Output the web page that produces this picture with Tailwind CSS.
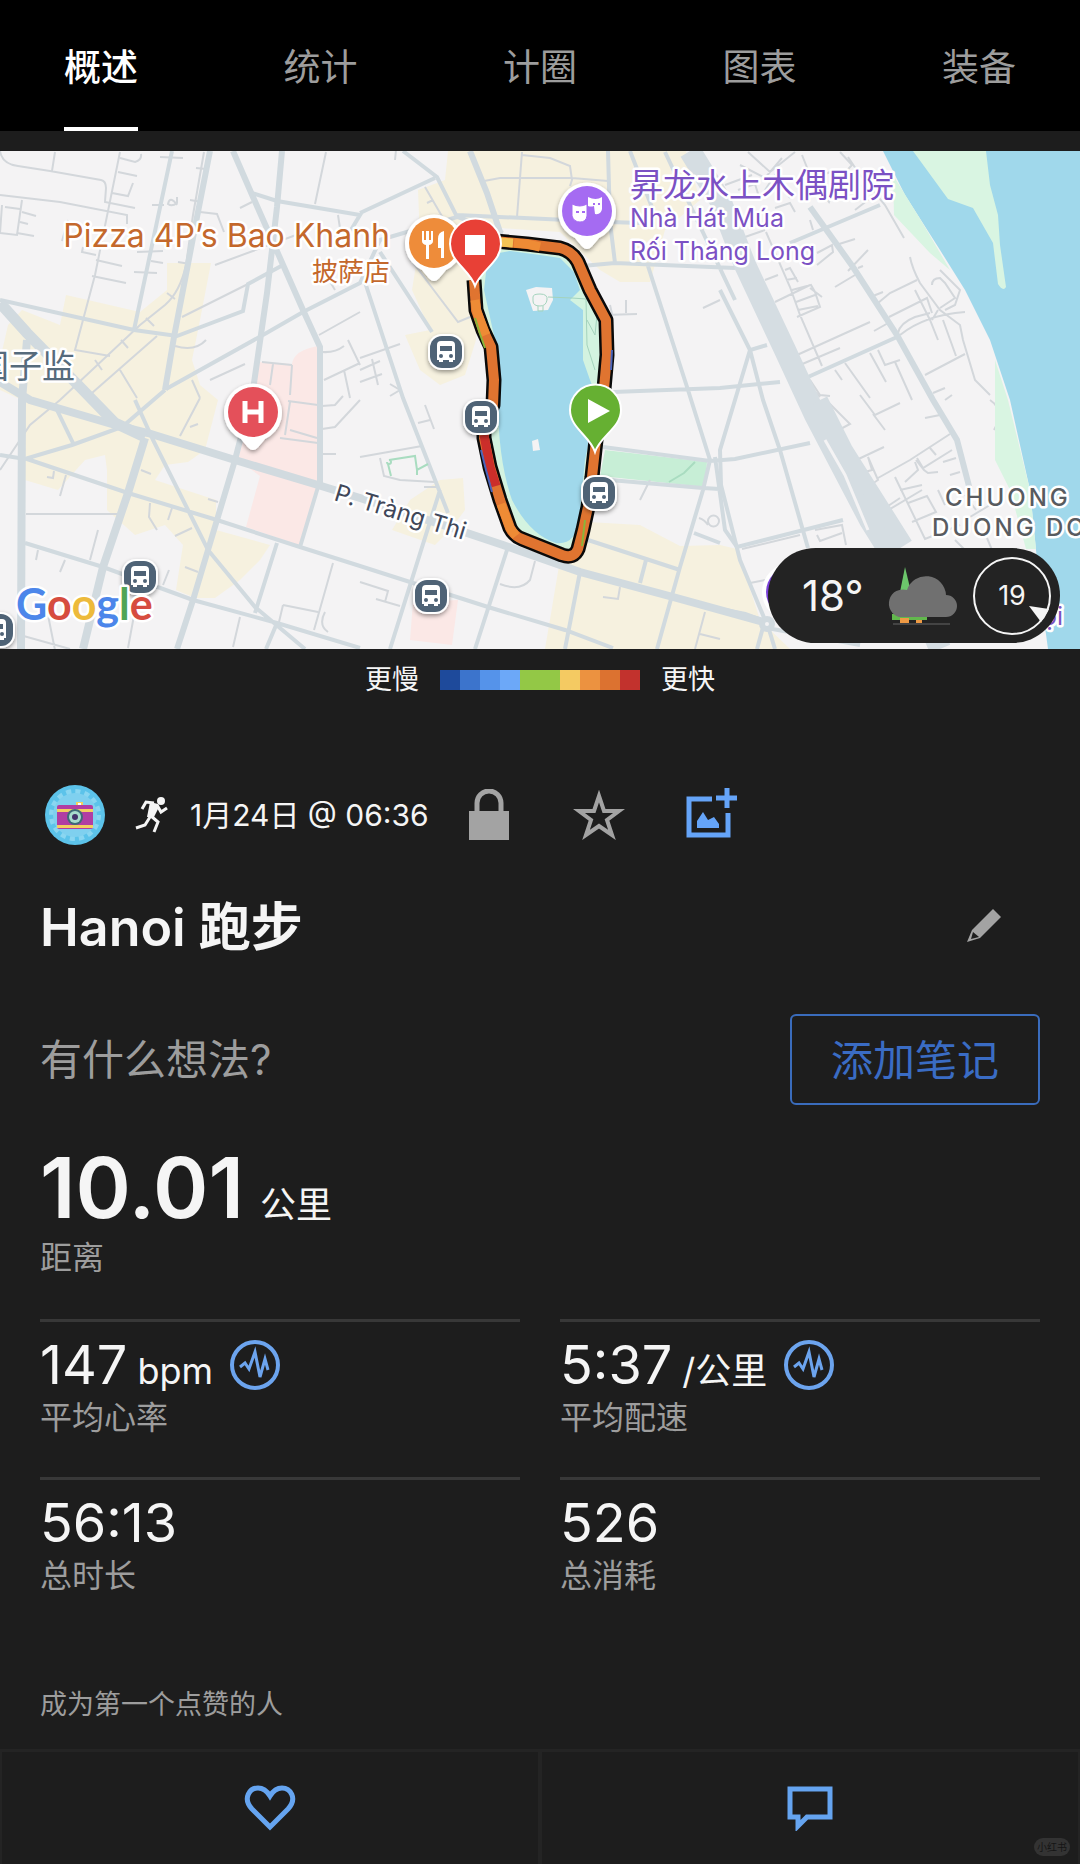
<!DOCTYPE html>
<html lang="zh-CN">
<head>
    <meta charset="UTF-8">
    <meta name="viewport" content="width=device-width, initial-scale=1.0">
    <title>Hanoi 跑步</title>
    <script src="https://cdn.jsdelivr.net/npm/@tailwindcss/browser@4"></script>
</head>
<body class="min-h-screen flex flex-col bg-[#1d1d1d] text-[#f5f5f5] font-['Inter','Noto_Sans_CJK_SC',sans-serif]">

    <!-- Tabs -->
    <nav class="flex justify-between bg-black px-16 text-[37px] leading-[56px] text-[#9d9d9d]">
        <button class="pt-10 pb-[31px] border-b-4 border-white text-white font-medium">概述</button>
        <button class="pt-10 pb-[31px] border-b-4 border-black">统计</button>
        <button class="pt-10 pb-[31px] border-b-4 border-black">计圈</button>
        <button class="pt-10 pb-[31px] border-b-4 border-black">图表</button>
        <button class="pt-10 pb-[31px] border-b-4 border-black">装备</button>
    </nav>

    <!-- Map -->
    <section class="relative mt-5 overflow-hidden">
        <svg class="block w-full h-[498px]" viewBox="0 151 1080 498" preserveAspectRatio="xMidYMid slice">
            <defs>
                <filter id="shadow" x="-30%" y="-30%" width="160%" height="170%">
                    <feDropShadow dx="0" dy="2" stdDeviation="2" flood-color="#000" flood-opacity=".4"/>
                </filter>
                <g id="bus">
                    <rect x="-18" y="-18" width="36" height="36" rx="14" fill="#fff" filter="url(#shadow)"/>
                    <rect x="-16" y="-16" width="32" height="32" rx="12" fill="#4f6376"/>
                    <path d="M-9 -7q0 -4 4 -4h10q4 0 4 4v15h-2v2h-4v-2h-6v2h-4v-2h-2z" fill="#fff"/>
                    <path d="M-6 -6h12v5h-12z" fill="#4f6376"/>
                    <circle cx="-5" cy="4" r="2" fill="#4f6376"/>
                    <circle cx="5" cy="4" r="2" fill="#4f6376"/>
                </g>
                <path id="poi" d="M0 38c-4 0 -7 -5 -12 -11a29 29 0 1 1 24 0c-5 6 -8 11 -12 11z" fill="#fff" filter="url(#shadow)"/>
            </defs>

            <rect x="0" y="151" width="1080" height="498" fill="#f4f3f4"/>

            <!-- land use -->
            <g fill="#f6f1df">
                <path d="M66 295L140 312L167 290V263H211L200 320L192 360L200 385L218 400L205 450L188 462L165 465L155 480L216 500V530L270 545L260 560L240 580L215 598L195 598L176 590L183 545L165 525L135 535L107 510V470L105 455L85 460L58 490L25 480L22 400L0 390V360L8 325L22 310L60 325Z"/>
                <path d="M448 151H686L700 200L665 230L650 282H620L600 270L560 232L500 228L478 260L476 340L465 375L440 385L420 370L405 335L430 330L412 290L420 240L418 190L445 180Z"/>
                <path d="M392 530L410 500L440 480L463 478L465 510L450 530L435 545Z"/>
                <path d="M545 649L560 560L588 522L640 525L680 546L720 545L737 549L760 620L790 649Z"/>
            </g>
            <g fill="#fbe8e6">
                <path d="M258 362L292 364Q294 350 318 346L320 485L301 546L246 527L260 476L238 460L253 400Z"/>
                <path d="M413 602L458 600L452 645L410 640Z"/>
            </g>
            <path d="M605 450L707 462L705 487L600 476Z" fill="#c7eed6"/>

            <!-- rail and side streets -->
            <g fill="none" stroke="#d3d7db" stroke-width="2">
                <path d="M0 151Q2 164 18 166L50 171L101 180Q106 181 106 188L105 202L135 208M52 171L55 152M0 195L60 202L127 215V224M2 205L0 233L17 235L22 200M22 212L36 216M20 222L28 224M17 233L34 236M5 207L20 209M68 220L62 241M120 152L95 275L75 350L110 356M118 172L137 176M120 158L135 162Q142 160 141 154M112 193L128 196L133 183M83 247L82 252L96 255M96 260L122 266M92 276L126 283M160 157L183 158M196 168L206 169M190 200L202 202M137 252L163 251M134 272L157 273M151 261L163 263M178 262L190 264M215 265L296 235M182 317L248 284"/>
                <path d="M204 152L193 215L186 265Q180 292 165 305L140 325L60 400L30 425L0 470M167 293L175 299M146 318L154 326M121 340L128 348M95 360L102 370M152 205H164M177 205Q170 195 168 204Q172 207 177 203V197M200 212L217 214L224 232M240 208L252 202M326 152L315 204M338 215L341 235M157 336L92 393M120 370L137 398M175 346Q195 352 206 340M192 380L200 398M210 380L245 364M262 362L292 365M273 364L270 385M292 365L290 395M319 335L360 312M322 352Q335 353 344 346M324 380L360 363M348 340L360 365M344 370L350 398M335 290L318 262M26 514H118M47 477L53 478L54 471M66 475L60 496M38 550L36 560M65 560L60 572M98 530L90 560M150 503L149 517L157 530M172 508L168 520M192 528L175 536M208 499L218 502M185 567L198 572M169 570L163 585M141 470L151 474M280 151M333 563L314 630M283 605L318 612M283 605L279 622M325 612Q318 625 328 632M240 617L233 647M135 610L128 648M48 615L55 650M20 635L70 649M290 402L285 435M288 401L318 405M280 438L318 443M290 430L317 438M200 398L180 436M190 427L198 424M322 406L335 405L343 396M322 429L335 427L360 400M322 454H336"/>
                <path d="M522 152L517 217M522 155L550 158L570 166L572 180L570 186M484 181L500 178L572 178L608 181M425 187L447 225L450 235M427 203L433 200M411 260L458 322L470 317M360 358L400 344M360 370L380 361M372 359L378 385M360 382L382 374M390 384L400 390L390 396M396 150L395 160M610 305L612 314M605 315L637 314M626 300V313M703 308L720 300M425 405L434 429M418 423L430 420M360 457L422 446M380 458L384 476L400 480L435 482M424 487L436 487M535 561L530 580Q520 592 500 584M360 582L388 591L385 602M376 599L400 606M603 597L618 599L620 587M699 518Q705 520 708 525M708 521A5 5 0 1 0 719 521A5 5 0 1 0 708 521M705 612L695 649M700 634L720 639M650 480L640 500"/>
                <path d="M748 152L770 172L795 152M740 165L765 178L782 158M725 185L752 175M738 190L755 184L760 200M765 190L775 175L790 198M775 208L790 203L795 212M802 155L812 180L830 172M820 190L829 202L832 195M840 152L852 165L840 178M862 185L868 200L855 210M848 157L860 175L885 205L904 238M745 237L765 230M766 232L790 287L800 315L822 366M810 220L813 230M817 253L832 245L833 252L817 265M836 245L855 239M848 271L868 250M858 268L863 266M835 287L855 275M785 270L790 268L798 282M786 280L797 278M765 280L778 275M775 302L810 285M792 290L811 285L815 292L820 307L797 317M810 288L822 297M796 302L815 295M798 310L818 306M873 296L883 292M878 303L890 293L917 280M889 317L927 298L932 313M874 331L890 322M797 355L870 322M800 365L840 348M910 257Q912 268 920 283L940 310L960 325L963 340L975 380L990 395M932 285Q932 278 940 278L945 283L955 298L940 308M940 270L960 290L955 305L945 310M915 290L930 320L938 340M900 335Q925 315 965 312M898 333Q900 323 915 317L930 313M932 320L938 310M943 320L956 356M925 375L965 354M835 370L842 380M845 363L870 398M878 350L885 365L900 360M870 353L886 382M895 362L912 400M810 380L820 395L830 396M933 393L945 388"/>
                <path d="M826 400L850 424L835 432M860 395L875 415L900 403M873 414L885 430M925 418L940 415M850 463L884 447M854 475L872 470L868 457L878 480L866 488M878 478L910 460L950 434M917 458L923 468L952 450M930 448L936 455M916 460L924 470L928 473L938 472M915 462L918 470L905 482M895 477L925 539L960 525M900 490L922 485M880 515L922 490M882 510L900 498M908 503L927 496L936 512L912 522M943 462L956 458M950 475L960 472M938 490L945 505M965 520L990 505M976 510L965 495M815 530L842 525L846 545M817 535L820 541L842 533M742 549L800 535M750 583L765 580M990 400Q1005 410 994 430M987 538L992 550M955 540L965 550M805 382L820 397M945 400L952 395"/>
            </g>

            <!-- main streets -->
            <g fill="none" stroke="#d1dadf" stroke-width="4">
                <path d="M172 151L134 330M252 193L277 201L360 215L345 240M283 265L248 284L243 311L177 336L134 330L0 300M166 389L263 335L303 312L360 283L380 240L457 217M57 410L73 443M135 400L153 440L188 510L208 550L255 607L305 649M25 543L103 567L193 600L277 623L360 648M277 543L255 613M277 623L266 649M318 487L300 547M27 459L128 493L217 520L300 547L360 566L410 582L488 607L565 630L613 648M0 455L25 459L72 445L122 427L165 390"/>
                <path d="M360 213L435 178M403 151L437 177L457 217L503 233M457 215L610 222L640 223M608 151L610 222L615 263M630 151L655 215M582 266L615 263L735 268M360 267L403 398L448 513M380 252L432 332M647 263L688 390L710 460L703 490L680 567L657 649M613 392L720 388L780 382M665 152L690 205L735 300M603 447L710 461L735 459L810 443M610 480L703 488L720 489M588 540L680 570M694 533L720 543M646 560L640 583M440 490L390 649M507 550L475 649M580 572L565 649M715 457L725 530L737 547L843 520M360 457"/>
                <path d="M720 290L750 350L763 400L780 450L808 548M767 345L750 350L735 400L720 450L721 485L740 560L765 620L757 649M767 623L775 649M808 377L897 337M790 243L880 205M767 628L860 645"/>
            </g>
            <g fill="none" stroke="#d1dadf" stroke-width="6">
                <path d="M210 151L197 217L174 337L165 390M233 151L253 197L303 310L320 347V487M282 151L277 207L267 293L253 390L235 460L208 550L193 600L177 649M470 151L487 193L500 232M810 207L853 267L897 335L933 400L957 440L970 490M767 623L745 615L720 610"/>
            </g>
            <g fill="none" stroke="#d1dadf" stroke-width="8">
                <path d="M27 340L22 400L21 649M0 382L30 400L115 425L148 433L235 460L318 485L360 498L467 533L503 545L580 572L673 597L767 623M145 438L128 493L103 567L83 649"/>
                <path d="M0 303L27 333L80 387L115 423L145 437" stroke-width="11"/>
                <path d="M690 151L720 200L745 265L785 350L815 415L870 520L920 600L940 649" stroke-width="22" stroke="#d5dde2"/>
                <path d="M820 400L845 450L905 545" stroke-width="16" stroke="#d5dde2"/>
                <path d="M825 440L845 475L868 530" stroke="#f4f3f4" stroke-width="3"/>
            </g>
            <circle cx="767" cy="624" r="5" fill="#f4f3f4" stroke="#d1dadf" stroke-width="6"/>
            <path d="M387 462A2 2 0 1 0 389 460L415 456L417 470L428 464M417 468V475M388 464L391 476M695 462L684 473L669 482" fill="none" stroke="#a9dcc0" stroke-width="2"/>

            <!-- Red River -->
            <path d="M883 151L905 195L940 250L965 290L990 340L1010 400L1030 490L1040 590L1048 649H1080V151Z" fill="#a0d8eb"/>
            <g fill="#d9f5e2">
                <path d="M913 151L948 199L973 208L993 243L998 284Q1003 292 1006 287L1000 245L998 215L990 185L986 151Z"/>
                <path d="M893 175L922 222L950 270L930 253L894 215Z"/>
                <path d="M995 360L1008 400L1030 490L1036 549H1026L1010 490L995 460Z"/>
            </g>

            <!-- Hoan Kiem lake -->
            <path d="M474 284L482 327L493 380L484 437L500 500L510 530L570 555L582 533L595 450L607 350L606 320L570 252L527 244L478 245Z" fill="#d3f3e0"/>
            <path d="M488 255L510 251L540 255L560 258L574 272L580 290L570 300L583 310L583 360L590 380L598 400L585 460L579 520Q576 545 556 543Q530 535 512 500Q498 460 498 400L495 340L484 290Z" fill="#a0d8eb"/>
            <path d="M526 290L536 287L552 288L553 300L548 310L533 311Z" fill="#f4f3f4"/>
            <path d="M533 297Q533 294 540 294Q548 294 547 300Q546 306 540 306Q533 306 533 301ZM538 306V311H543V306M548 297L572 298L586 299L587 345L595 370M587 320L595 335L597 315" fill="none" stroke="#a4d3bd" stroke-width="1"/>
            <path d="M532 441L538 439L540 450L533 451Z" fill="#f4f3f4"/>

            <!-- route -->
            <g fill="none" stroke-linejoin="round">
                <path d="M474 280L476 310L483 330L491 347L494 380L493 405L484 425V438L490 467L500 500L510 528Q514 536 522 539L562 555Q574 559 578 549L583 530L588 507L592 477L596 440L603 400L607 355L606 320L590 290L578 262Q572 251 560 248L527 244L495 241" stroke="#0a0a0a" stroke-width="15"/>
                <path d="M474 280L476 310L483 330L491 347L494 380L493 405L484 425V438L490 467L500 500L510 528Q514 536 522 539L562 555Q574 559 578 549L583 530L588 507L592 477L596 440L603 400L607 355L606 320L590 290L578 262Q572 251 560 248L527 244L495 241" stroke="#e07430" stroke-width="10"/>
                <path d="M475 300L477 312L486 335M540 247L527 244L514 243M501 504L510 528L516 536" stroke="#ee8b35" stroke-width="9"/>
                <path d="M513 243L500 242" stroke="#f3c355" stroke-width="9"/>
                <path d="M484 435L490 467L496 486" stroke="#cb2e2a" stroke-width="9"/>
                <path d="M475 318L480 334L485 348M585 520L582 546" stroke="#8ab53a" stroke-width="2"/>
                <path d="M481 450L486 470L492 492M612 350L611 370" stroke="#4a64ba" stroke-width="2"/>
            </g>

            <!-- place pins -->
            <g transform="translate(434 243)">
                <use href="#poi"/>
                <circle r="25" fill="#ee8c3a"/>
                <path d="M-12 -12h2v9h2v-9h3v9h2v-9h2v10q0 3 -4 4v14h-3v-14q-4 -1 -4 -4zM10 -12q-6 1 -6 8v9h3v10h3z" fill="#fff"/>
            </g>
            <g transform="translate(587 211)">
                <use href="#poi"/>
                <circle r="25" fill="#a56bf2"/>
                <path d="M1 -14q8 4 14 0v12q-1 6 -7 5l-1 -8q-3 1 -6 0z" fill="#fff"/>
                <path d="M-15 -7q8 4 15 0v12q-1 6 -7 6t-8 -6z" fill="#fff" stroke="#a56bf2"/>
                <path d="M-11 1h3M-5 1h3M6 -7h2M11 -7h2" stroke="#a56bf2" stroke-width="2"/>
            </g>
            <g transform="translate(253 412)">
                <use href="#poi"/>
                <circle r="25" fill="#e4505a"/>
                <path d="M-8 -11V11M8 -11V11M-8 0H8" stroke="#fff" stroke-width="5"/>
            </g>
            <use href="#bus" x="446" y="352"/>
            <use href="#bus" x="481" y="417"/>
            <use href="#bus" x="599" y="493"/>
            <use href="#bus" x="431" y="596"/>
            <use href="#bus" x="140" y="577"/>
            <use href="#bus" x="-3" y="630"/>
            <circle cx="791" cy="592" r="29" fill="#fff"/>
            <circle cx="791" cy="592" r="25" fill="#7b41d8"/>

            <!-- start / stop markers -->
            <path d="M475 286C470 270 450 262 450 244a25 25 0 1 1 51 0C501 262 481 270 475 286Z" fill="#e84036" stroke="#fff" stroke-width="2"/>
            <path d="M465 235h20v20h-20z" fill="#fff"/>
            <path d="M595 452C590 436 570 428 570 410a25 25 0 1 1 51 0C621 428 600 436 595 452Z" fill="#66b032" stroke="#fff" stroke-width="2"/>
            <path d="M588 399L610 411L588 423Z" fill="#fff"/>

            <!-- labels -->
            <g stroke="#fff" stroke-width="5" stroke-linejoin="round" paint-order="stroke">
                <g fill="#c4682c" text-anchor="end">
                    <text x="390" y="247" font-size="32">Pizza 4P’s Bao Khanh</text>
                    <text x="390" y="281" font-size="26">披萨店</text>
                </g>
                <g fill="#7b51c4">
                    <text x="630" y="197" font-size="33">昇龙水上木偶剧院</text>
                    <text x="630" y="227" font-size="25">Nhà Hát Múa</text>
                    <text x="630" y="260" font-size="25">Rối Thăng Long</text>
                    <text x="1042" y="625" font-size="25">ọi</text>
                </g>
                <text x="75" y="378" font-size="33" fill="#566b7c" text-anchor="end">国子监</text>
                <text transform="translate(333 500) rotate(17)" font-size="24" fill="#3f4759">P. Tràng Thi</text>
                <g fill="#585b60" font-size="24" font-weight="500" letter-spacing="3">
                    <text x="945" y="506">CHUONG</text>
                    <text x="932" y="536">DUONG DO</text>
                </g>
                <text x="16" y="620" font-size="43" font-weight="700" font-family="Lato, sans-serif"><tspan fill="#4c86ea">G</tspan><tspan fill="#d64c3f">o</tspan><tspan fill="#edba3b">o</tspan><tspan fill="#4c86ea">g</tspan><tspan fill="#4fa556">l</tspan><tspan fill="#d64c3f">e</tspan></text>
            </g>
        </svg>

        <!-- Weather -->
        <div class="absolute right-5 bottom-[6px] w-[292px] h-[95px] rounded-full bg-[#232323] flex items-center justify-between pl-[34px] pr-2">
            <span class="text-[42px] leading-none">18°</span>
            <svg class="w-20 h-[60px]" viewBox="0 0 80 60">
                <path d="M22 26L27 1L33 26Z" fill="#6cc66b"/>
                <path d="M14 48h35v6H14z" fill="#62b84d"/>
                <path d="M22 52h9v5h-9zM38 54h6v3h-6z" fill="#ee9a44"/>
                <path d="M21 51a14 14 0 1 1 8 -27a20 20 0 0 1 39 5a11 11 0 0 1 0 22z" fill="#707070"/>
                <path d="M15 58h57" stroke="#444" stroke-width="2"/>
            </svg>
            <div class="relative size-20 flex items-center justify-center">
                <svg class="absolute inset-0" viewBox="0 0 80 80">
                    <circle cx="40" cy="40" r="38" fill="none" stroke="#f5f5f5" stroke-width="2"/>
                    <path d="M57 50L77 53L69 66Z" fill="#f5f5f5"/>
                </svg>
                <span class="text-[27px] leading-none">19</span>
            </div>
        </div>
    </section>

    <!-- Pace legend -->
    <div class="h-[60px] pt-[2px] flex items-center justify-center gap-[21px] text-[27px] leading-10">
        <span>更慢</span>
        <div class="w-[200px] h-5 grid grid-cols-10">
            <i class="bg-[#1e4a9b]"></i>
            <i class="bg-[#3c74cc]"></i>
            <i class="bg-[#5593ea]"></i>
            <i class="bg-[#6ca8f8]"></i>
            <i class="bg-[#93c846]"></i>
            <i class="bg-[#93c846]"></i>
            <i class="bg-[#f4ca62]"></i>
            <i class="bg-[#ec9240]"></i>
            <i class="bg-[#dc7230]"></i>
            <i class="bg-[#c2322d]"></i>
        </div>
        <span>更快</span>
    </div>

    <main class="px-10">
        <!-- Activity info -->
        <div class="mt-[75px] h-[62px] flex items-center">
            <svg class="ml-1 size-[62px]" viewBox="0 0 62 62">
                <circle cx="31" cy="31" r="30" fill="#5cc3ea"/>
                <circle cx="31" cy="31" r="23" fill="none" stroke="#8ad6f1" stroke-width="6" stroke-dasharray="5 4"/>
                <circle cx="31" cy="31" r="22" fill="#7fd0ef"/>
                <path d="M32 18h7v5h-7z" fill="#f3d35e"/>
                <path d="M34 19h3v3h-3z" fill="#fff"/>
                <rect x="13" y="21" width="36" height="24" rx="2" fill="#b13da3"/>
                <path d="M13 25h36v3H13zM13 41h36v3H13z" fill="#f3cf5f"/>
                <circle cx="31" cy="33" r="8" fill="#3f6a78"/>
                <circle cx="31" cy="33" r="6" fill="#a7dccd"/>
                <circle cx="31" cy="33" r="3" fill="#43336b"/>
            </svg>
            <svg class="ml-7 w-9 h-[38px]" viewBox="0 0 36 38">
                <circle cx="27" cy="5" r="4" fill="#f5f5f5"/>
                <path d="M8 13L12 6L20 7M23 9L27 16L33 12M17 20L24 26L20 36M16 21L11 29L2 32" fill="none" stroke="#f5f5f5" stroke-width="3"/>
                <path d="M16 6L24 8L25 11L20 21H13Z" fill="#f5f5f5"/>
            </svg>
            <span class="ml-5 text-[30px] leading-10">1月24日 @ 06:36</span>
            <button aria-label="隐私" class="ml-10">
                <svg class="w-10 h-[52px]" viewBox="0 0 40 52">
                    <path d="M8 24V14a12 12 0 0 1 24 0v10" fill="none" stroke="#a3a3a3" stroke-width="5"/>
                    <path d="M0 22h40v29H0z" fill="#a3a3a3"/>
                </svg>
            </button>
            <button aria-label="收藏" class="ml-16">
                <svg class="w-[52px] h-[50px]" viewBox="0 0 52 50">
                    <path d="M26 6L31 21H46L34 30L39 45L26 36L13 45L18 30L6 21H21Z" fill="none" stroke="#a3a3a3" stroke-width="4"/>
                </svg>
            </button>
            <button aria-label="添加图片" class="ml-[61px] pb-1">
                <svg class="w-[52px] h-[52px]" viewBox="0 0 52 52">
                    <path d="M26 12H3V48H42V26" fill="none" stroke="#65a4f8" stroke-width="5"/>
                    <path d="M41 1V21M30 11H51" stroke="#65a4f8" stroke-width="5"/>
                    <path d="M11 41V34L17 25L22 33L28 30L33 37V41Z" fill="#65a4f8"/>
                </svg>
            </button>
        </div>

        <div class="mt-12 h-16 flex items-center justify-between">
            <h1 class="pt-1 text-[52px] leading-16 font-semibold">Hanoi 跑步</h1>
            <button aria-label="编辑" class="mr-[38px]">
                <svg class="size-9" viewBox="0 0 36 36">
                    <path d="M27 1L35 9L14 30L1 34L6 22Z" fill="#a3a3a3"/>
                    <path d="M7 24L13 29L5 31Z" fill="#1d1d1d"/>
                </svg>
            </button>
        </div>

        <div class="mt-14 flex items-center justify-between text-[42px] leading-[60px]">
            <p class="text-[#9d9d9d]">有什么想法?</p>
            <button class="w-[250px] h-[91px] pt-[2px] rounded-md border-2 border-[#3a6cbc] text-[#3a6cc4]">添加笔记</button>
        </div>

        <!-- Distance -->
        <div class="mt-[41px]">
            <div class="h-[84px] flex items-baseline gap-4">
                <strong class="text-[84px] leading-[84px] font-semibold">10.01</strong>
                <span class="text-4xl leading-none">公里</span>
            </div>
            <p class="mt-2 text-[32px] leading-10 text-[#9d9d9d]">距离</p>
        </div>

        <!-- Stats -->
        <div class="mt-[41px] grid grid-cols-2 gap-x-10">
            <div class="h-[158px] border-t-3 border-[#383838] pt-[15px]">
                <div class="h-14 flex items-center gap-4">
                    <p class="flex items-baseline gap-[10px] text-[54px] leading-14">147 <span class="text-4xl leading-none">bpm</span></p>
                    <button aria-label="心率图表">
                        <svg class="size-[52px]" viewBox="0 0 52 52">
                            <circle cx="26" cy="26" r="23" fill="none" stroke="#6ca4ee" stroke-width="4"/>
                            <path d="M11 28L16 24L20 30L26 13L31 38L36 20L39 31" fill="none" stroke="#6ca4ee" stroke-width="3"/>
                        </svg>
                    </button>
                </div>
                <p class="mt-[5px] text-[32px] leading-10 text-[#9d9d9d]">平均心率</p>
            </div>
            <div class="h-[158px] border-t-3 border-[#383838] pt-[15px]">
                <div class="h-14 flex items-center gap-4">
                    <p class="flex items-baseline gap-[10px] text-[54px] leading-14">5:37 <span class="text-4xl leading-none">/公里</span></p>
                    <button aria-label="配速图表">
                        <svg class="size-[52px]" viewBox="0 0 52 52">
                            <circle cx="26" cy="26" r="23" fill="none" stroke="#6ca4ee" stroke-width="4"/>
                            <path d="M11 28L16 24L20 30L26 13L31 38L36 20L39 31" fill="none" stroke="#6ca4ee" stroke-width="3"/>
                        </svg>
                    </button>
                </div>
                <p class="mt-[5px] text-[32px] leading-10 text-[#9d9d9d]">平均配速</p>
            </div>
            <div class="h-[158px] border-t-3 border-[#383838] pt-[15px]">
                <p class="text-[54px] leading-14">56:13</p>
                <p class="mt-[5px] text-[32px] leading-10 text-[#9d9d9d]">总时长</p>
            </div>
            <div class="h-[158px] border-t-3 border-[#383838] pt-[15px]">
                <p class="text-[54px] leading-14">526</p>
                <p class="mt-[5px] text-[32px] leading-10 text-[#9d9d9d]">总消耗</p>
            </div>
        </div>

        <p class="mt-[50px] text-[27px] leading-10 text-[#9d9d9d]">成为第一个点赞的人</p>
    </main>

    <!-- Like / comment -->
    <footer class="relative mt-6 flex-1 grid grid-cols-2 border-t-3 border-x-2 border-[#242424]">
        <button aria-label="点赞" class="flex items-center justify-center border-r-2 border-[#242424]">
            <svg class="w-[52px] h-[46px]" viewBox="0 0 52 46">
                <path d="M26 42L8 24C-2 13 6 3 14 3C20 3 23 6 26 11C29 6 32 3 38 3C46 3 54 13 44 24Z" fill="none" stroke="#65a4f0" stroke-width="5"/>
            </svg>
        </button>
        <button aria-label="评论" class="flex items-center justify-center border-l-2 border-[#242424]">
            <svg class="w-[46px] h-[46px]" viewBox="0 0 46 46">
                <path d="M3 4H43V32H20L11 41V32H3Z" fill="none" stroke="#65a4f0" stroke-width="5"/>
            </svg>
        </button>
        <span class="absolute right-2 bottom-2 w-[36px] h-[18px] rounded-full bg-[#333] text-[#151515] text-[10px] leading-[18px] text-center">小红书</span>
    </footer>
</body>
</html>
